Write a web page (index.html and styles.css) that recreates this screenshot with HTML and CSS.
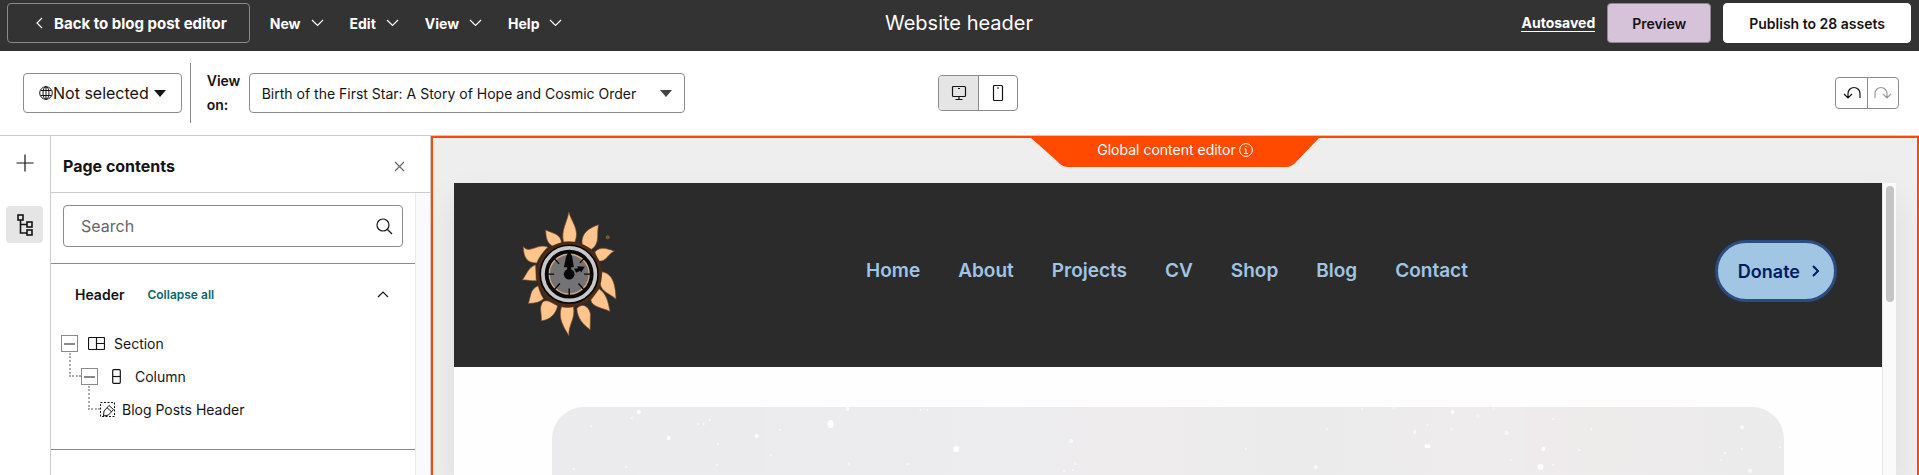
FILE: index.html
```html
<!DOCTYPE html>
<html lang="en">
<head>
    <meta charset="UTF-8">
    <meta name="viewport" content="width=device-width, initial-scale=1.0">
    <title>Website header</title>
    <link rel="stylesheet" href="styles.css">
</head>
<body>
    <header class="topbar">
        <div class="topbar-left">
            <button class="btn btn-back">
                <svg class="icon" width="7" height="12" viewBox="0 0 7 12"><path d="M6 1L1 6l5 5"/></svg>
                Back to blog post editor
            </button>
            <nav class="menus">
                <button class="menu">New <svg class="icon" width="13" height="8" viewBox="0 0 13 8"><path d="M1 1l5.500 5.500L12 1"/></svg></button>
                <button class="menu">Edit <svg class="icon" width="13" height="8" viewBox="0 0 13 8"><path d="M1 1l5.500 5.500L12 1"/></svg></button>
                <button class="menu">View <svg class="icon" width="13" height="8" viewBox="0 0 13 8"><path d="M1 1l5.500 5.500L12 1"/></svg></button>
                <button class="menu">Help <svg class="icon" width="13" height="8" viewBox="0 0 13 8"><path d="M1 1l5.500 5.500L12 1"/></svg></button>
            </nav>
        </div>
        <h1 class="title">Website header</h1>
        <div class="topbar-right">
            <a class="autosaved" href="#">Autosaved</a>
            <button class="btn btn-preview">Preview</button>
            <button class="btn btn-publish">Publish to 28 assets</button>
        </div>
    </header>

    <div class="toolbar">
        <div class="toolbar-left">
            <button class="language">
                <svg class="icon thin" width="14" height="14" viewBox="0 0 14 14"><circle cx="7" cy="7" r="6.300"/><ellipse cx="7" cy="7" rx="3" ry="6.300"/><path d="M7 .7v12.600M1.600 4.500h10.800M1.600 9.500h10.800"/></svg><span>Not selected</span>
                <svg class="caret" width="12" height="7" viewBox="0 0 12 7"><path d="M0 0h12L6 7z"/></svg>
            </button>
            <div class="view-on">
                <label for="post">View on:</label>
                <div class="select-wrap">
                    <select id="post">
                        <option>Birth of the First Star: A Story of Hope and Cosmic Order</option>
                    </select>
                    <svg class="caret" width="12" height="7" viewBox="0 0 12 7"><path d="M0 0h12L6 7z"/></svg>
                </div>
            </div>
        </div>
        <div class="group devices">
            <button class="active" aria-label="Desktop"><svg class="icon" width="16" height="16" viewBox="0 0 16 16"><rect x="1.500" y="1.500" width="13" height="10" rx="1"/><path d="M8 11.500v3M4.500 14.500h7M7 3.500h2"/></svg></button>
            <button aria-label="Mobile"><svg class="icon" width="12" height="18" viewBox="0 0 12 18"><rect x="1.500" y="1.500" width="9" height="15" rx="1"/><path d="M5 4h2"/></svg></button>
        </div>
        <div class="group history">
            <button aria-label="Undo"><svg class="icon" width="18" height="14" viewBox="0 0 18 14"><path d="M1 8l4 4 4-4M5 12V7.500a6 6 0 0 1 12 0V12"/></svg></button>
            <button aria-label="Redo" disabled><svg class="icon" width="18" height="14" viewBox="0 0 18 14"><path d="M17 8l-4 4-4-4M13 12V7.500a6 6 0 0 0-12 0V12"/></svg></button>
        </div>
    </div>

    <div class="workspace">
        <aside class="rail">
            <button aria-label="Add"><svg class="icon" width="18" height="18" viewBox="0 0 18 18"><path d="M9 .5v17M.5 9h17"/></svg></button>
            <button class="active" aria-label="Contents"><svg class="icon tree-icon" width="16" height="22" viewBox="0 0 16 22"><rect x="1" y="1" width="5" height="5"/><rect x="10" y="8" width="5" height="5"/><rect x="10" y="16" width="5" height="5"/><path d="M3.500 6v13H10M3.500 10.500H10"/></svg></button>
        </aside>

        <aside class="panel">
            <div class="panel-header">
                <h2>Page contents</h2>
                <button aria-label="Close"><svg class="icon" width="11" height="11" viewBox="0 0 11 11"><path d="M1 1l9 9M10 1l-9 9"/></svg></button>
            </div>
            <div class="panel-body">
                <div class="panel-content">
                    <div class="search">
                        <input type="text" placeholder="Search" aria-label="Search">
                        <svg class="icon" width="17" height="17" viewBox="0 0 17 17"><circle cx="7" cy="7" r="6"/><path d="M11.500 11.500L16 16"/></svg>
                    </div>
                    <section class="tree-section">
                        <div class="tree-header">
                            <h3>Header</h3>
                            <button class="collapse">Collapse all</button>
                            <button class="toggle" aria-label="Toggle header"><svg class="icon" width="12" height="7" viewBox="0 0 12 7"><path d="M1 6l5-5 5 5"/></svg></button>
                        </div>
                        <ul class="tree">
                            <li>
                                <button class="minus" aria-label="Collapse section"></button>
                                <svg class="icon" width="17" height="13" viewBox="0 0 17 13"><rect x=".5" y=".5" width="16" height="12" rx="1"/><path d="M8.500 .5v12M8.500 6.500h8"/></svg>
                                <span>Section</span>
                            </li>
                            <li class="level-1">
                                <button class="minus" aria-label="Collapse column"></button>
                                <svg class="icon" width="9" height="15" viewBox="0 0 9 15"><rect x=".7" y=".7" width="7.600" height="13.600" rx="1"/><path d="M.7 7.500h7.600"/></svg>
                                <span>Column</span>
                            </li>
                            <li class="level-2">
                                <svg class="icon thin" width="15" height="15" viewBox="0 0 15 15"><rect x=".5" y=".5" width="14" height="14" stroke-dasharray="2 1.500"/><path d="M3.500 14l.5-5L9 3.500l4.500 4L8.500 13zM7 5.700l4.500 4"/></svg>
                                <span>Blog Posts Header</span>
                            </li>
                        </ul>
                    </section>
                </div>
                <div class="panel-scroll"></div>
            </div>
        </aside>

        <main class="canvas">
            <div class="tab">
                <svg class="tab-shape" width="288" height="31" viewBox="0 0 288 31"><path d="M0 2h288l-22 23q-5 6-11 6H37q-6 0-11-6z"/></svg>
                <span>Global content editor</span>
                <svg class="icon thin" width="14" height="14" viewBox="0 0 14 14"><circle cx="7" cy="7" r="6.400"/><path d="M5.500 6H7v4.500M5 10.500h4M6.500 3.500h1"/></svg>
            </div>
            <div class="preview">
                <div class="page">
                    <header class="site-header">
                        <svg class="logo" width="97" height="128" viewBox="65 60 290 385">
                            <g class="petals">
                                <path d="M192 156C184 120 202 100 208 66C216 96 242 120 226 157Z"/>
                                <path d="M248 163C244 130 268 114 298 104C290 128 304 160 276 178Z"/>
                                <path d="M286 186C304 168 322 176 345 184C326 190 322 218 296 213Z"/>
                                <path d="M308 246C342 252 348 286 350 328C334 312 306 308 302 280Z"/>
                                <path d="M299 297C324 314 326 340 332 365C308 354 278 352 274 331Z"/>
                                <path d="M232 356C250 336 270 352 273 374L272 420C252 404 234 388 232 356Z"/>
                                <path d="M186 351C200 354 210 354 222 351C228 390 207 402 208 438C194 414 174 386 186 351Z"/>
                                <path d="M131 335C146 328 160 342 174 348C170 372 150 392 125 393C128 374 116 352 131 335Z"/>
                                <path d="M116 288C120 306 126 318 132 327C118 340 102 340 86 341C94 322 90 298 116 288Z"/>
                                <path d="M108 225L110 273C96 274 82 270 68 270C82 254 84 234 108 225Z"/>
                                <path d="M145 172C130 186 118 202 112 219C84 220 72 206 71 170C88 194 116 158 145 172Z"/>
                                <path d="M138 120C160 130 184 132 186 159L158 168C138 156 140 136 138 120Z"/>
                            </g>
                            <circle cx="209" cy="253" r="94" fill="#080808" stroke="#4b2b15" stroke-width="9"/>
                            <circle cx="209" cy="253" r="79" fill="#080808" stroke="#c6c7ca" stroke-width="11"/>
                            <circle cx="209" cy="253" r="60" fill="#737375" stroke="#d9a77a" stroke-width="4"/>
                            <path d="M209 186v20M209 296v24M142 253h22M254 253h22M165 207l14 15M165 299l16-18M253 299l-16-18M253 207l-12 12" stroke="#080808" stroke-width="4"/>
                            <circle cx="209" cy="253" r="16" fill="#080808"/>
                            <path d="M203 244v-12h-10l7-32 9-20 9 20 5 32h-8v12zM224 237l6 12 12-6 3 5 11-17-23-2 3 6z" fill="#080808"/>
                            <circle cx="325" cy="142" r="5" fill="#71513a" stroke="#a98564"/>
                        </svg>
                        <nav class="site-nav">
                            <a href="#">Home</a>
                            <a href="#">About</a>
                            <a href="#">Projects</a>
                            <a href="#">CV</a>
                            <a href="#">Shop</a>
                            <a href="#">Blog</a>
                            <a href="#">Contact</a>
                        </nav>
                        <a class="donate" href="#">Donate <svg class="icon" width="7" height="12" viewBox="0 0 7 12"><path d="M1 1l5 5-5 5"/></svg></a>
                    </header>
                    <div class="hero">
                        <svg class="stars" width="1234" height="68" viewBox="0 0 1234 68">
                            <g class="bright"><ellipse cx="279" cy="17" rx="3" ry="4"/><ellipse cx="405" cy="42" rx="3" ry="3"/><circle cx="990" cy="60" r="3"/><circle cx="87" cy="5" r="2"/><circle cx="117" cy="31" r="2"/><circle cx="205" cy="29" r="2"/><circle cx="902" cy="5" r="2"/><circle cx="993" cy="42" r="2"/><ellipse cx="877" cy="39" rx="3" ry="2"/></g>
                            <g class="dim"><circle cx="80" cy="11" r="1"/><circle cx="146" cy="17" r="1"/><circle cx="152" cy="17" r="1"/><circle cx="158" cy="13" r="1"/><circle cx="166" cy="37" r="1"/><circle cx="219" cy="48" r="1"/><circle cx="165" cy="58" r="1"/><circle cx="228" cy="23" r="1"/><circle cx="296" cy="2" r="2"/><circle cx="297" cy="57" r="1"/><circle cx="369" cy="3" r="1"/><circle cx="376" cy="3" r="1"/><circle cx="356" cy="57" r="1"/><circle cx="520" cy="34" r="2"/><circle cx="524" cy="57" r="1"/><circle cx="522" cy="63" r="1"/><circle cx="513" cy="64" r="1"/><circle cx="695" cy="42" r="1"/><circle cx="765" cy="60" r="2"/><circle cx="776" cy="22" r="1"/><circle cx="811" cy="2" r="1"/><circle cx="843" cy="1" r="1"/><circle cx="864" cy="25" r="2"/><circle cx="877" cy="18" r="1"/><circle cx="901" cy="22" r="1"/><circle cx="927" cy="9" r="1"/><circle cx="943" cy="1" r="1"/><circle cx="956" cy="26" r="2"/><circle cx="1003" cy="12" r="1"/><circle cx="1041" cy="22" r="1"/><circle cx="1029" cy="43" r="1"/><circle cx="960" cy="53" r="1"/><circle cx="1003" cy="58" r="1"/><circle cx="1192" cy="20" r="2"/><circle cx="1192" cy="42" r="1"/><circle cx="1175" cy="46" r="1"/><circle cx="1171" cy="53" r="1"/><circle cx="1200" cy="64" r="2"/><circle cx="1230" cy="40" r="1"/><circle cx="22" cy="62" r="1"/><circle cx="74" cy="60" r="1"/><circle cx="39" cy="19" r="1"/></g>
                        </svg>
                    </div>
                </div>
                <div class="page-scroll"><div class="thumb"></div></div>
            </div>
        </main>
    </div>
</body>
</html>
```

FILE: styles.css
```css
*,
*::before {
    box-sizing: border-box;
}

body {
    margin: 0;
    height: 100vh;
    overflow: hidden;
    display: flex;
    flex-direction: column;
    background: #fff;
    color: #141414;
    font-family: Inter, 'Noto Sans', sans-serif;
    font-size: 14px;
}

h1, h2, h3, ul {
    margin: 0;
    padding: 0;
}

button, input, select {
    font: inherit;
    color: inherit;
}

button {
    display: flex;
    align-items: center;
    justify-content: center;
    background: none;
    border: none;
    padding: 0;
    cursor: pointer;
}

.icon {
    flex: none;
    fill: none;
    stroke: currentColor;
    stroke-width: 1.2;
}

.thin {
    stroke-width: 1;
}

.caret {
    flex: none;
    fill: currentColor;
}

/* top bar */
.topbar {
    display: grid;
    grid-template-columns: 1fr auto 1fr;
    align-items: center;
    height: 51px;
    padding: 0 8px 5px 7px;
    background: #333;
    color: #fff;
}

.topbar-left,
.topbar-right {
    display: flex;
    align-items: center;
}

.topbar-right {
    justify-content: flex-end;
    gap: 12px;
}

.btn {
    height: 40px;
    border: 1px solid #8a8a8a;
    border-radius: 4px;
    font-weight: 700;
}

.btn-back {
    gap: 11px;
    padding: 0 22px 0 28px;
    font-size: 15px;
}

.menus {
    display: flex;
    gap: 26px;
    margin-left: 20px;
}

.menu {
    gap: 10px;
    font-weight: 700;
}

.title {
    font-size: 20px;
    font-weight: 400;
}

.autosaved {
    color: #fff;
    font-weight: 700;
    line-height: 16px;
    text-decoration: none;
    border-bottom: 1px solid #fff;
}

.btn-preview {
    padding: 0 24px;
    background: #d6c2d9;
    color: #141414;
    font-weight: 600;
}

.btn-publish {
    padding: 0 25px;
    background: #fff;
    border-color: #fff;
    color: #141414;
    font-weight: 600;
}

/* toolbar */
.toolbar {
    display: grid;
    grid-template-columns: 1fr auto 1fr;
    align-items: center;
    height: 85px;
    padding: 0 20px 0 23px;
    border-bottom: 1px solid #ccc;
}

.toolbar-left {
    display: flex;
    align-items: center;
}

.language {
    height: 40px;
    padding: 0 15px;
    border: 1px solid #8a8a8a;
    border-radius: 4px;
    font-size: 16px;
}

.language .caret {
    margin-left: 5px;
}

.view-on {
    display: flex;
    align-items: center;
    gap: 8px;
    height: 60px;
    margin-left: 8px;
    padding-left: 16px;
    border-left: 1px solid #8a8a8a;
}

.view-on label {
    width: 34px;
    font-weight: 600;
    line-height: 24px;
}

.select-wrap {
    display: grid;
    align-items: center;
    width: 436px;
}

.select-wrap select,
.select-wrap .caret {
    grid-area: 1 / 1;
}

.select-wrap select {
    appearance: none;
    width: 100%;
    height: 40px;
    padding: 0 40px 0 12px;
    border: 1px solid #8a8a8a;
    border-radius: 4px;
    background: #fff;
}

.select-wrap .caret {
    justify-self: end;
    margin-right: 13px;
    color: #444;
    pointer-events: none;
}

.group {
    display: flex;
    border: 1px solid #8a8a8a;
    border-radius: 4px;
    overflow: hidden;
}

.group button + button {
    border-left: 1px solid #8a8a8a;
}

.devices {
    margin-left: 34px;
}

.devices button {
    width: 39px;
    height: 34px;
}

.devices .active {
    background: #e5e5e5;
}

.history {
    justify-self: end;
}

.history button {
    width: 31px;
    height: 30px;
}

.history button:disabled {
    color: #999;
}

/* workspace */
.workspace {
    display: flex;
    flex: 1;
    min-height: 0;
}

.rail {
    display: flex;
    flex-direction: column;
    align-items: center;
    gap: 25px;
    width: 51px;
    padding: 8px 1px 0 0;
    border-right: 1px solid #ccc;
}

.rail button {
    width: 37px;
    height: 37px;
    border-radius: 4px;
}

.rail .active {
    background: #e5e5e5;
}

.tree-icon {
    stroke-width: 1.6;
}

.panel {
    display: flex;
    flex-direction: column;
    width: 380px;
    border-right: 1px solid #ccc;
}

.panel-header {
    display: flex;
    align-items: center;
    justify-content: space-between;
    height: 57px;
    padding: 4px 25px 0 12px;
    border-bottom: 1px solid #ccc;
}

.panel-header h2 {
    font-size: 16px;
    font-weight: 700;
}

.panel-header button {
    color: #666;
}

.panel-body {
    display: flex;
    flex: 1;
    min-height: 0;
}

.panel-content {
    flex: 1;
}

.panel-scroll {
    width: 15px;
    background: #fafafa;
    border-left: 1px solid #e8e8e8;
}

.search {
    display: flex;
    align-items: center;
    height: 42px;
    margin: 12px 12px 16px;
    padding: 0 9px 0 17px;
    border: 1px solid #8a8a8a;
    border-radius: 4px;
}

.search input {
    flex: 1;
    padding: 0;
    border: none;
    outline: none;
    background: none;
    font-size: 16px;
}

.search input::placeholder {
    color: #666;
}

.tree-section {
    height: 187px;
    border-top: 1px solid #8a8a8a;
    border-bottom: 1px solid #8a8a8a;
}

.tree-header {
    display: flex;
    align-items: center;
    height: 60px;
    padding: 0 26px 0 24px;
}

.tree-header h3 {
    font-size: 14px;
    font-weight: 600;
}

.collapse {
    margin-left: 23px;
    color: #0b6666;
    font-size: 12px;
    font-weight: 600;
}

.toggle {
    margin-left: auto;
}

.tree {
    padding: 3px 0 0 10px;
    list-style: none;
}

.tree li {
    display: flex;
    align-items: center;
    height: 33px;
}

.tree li span {
    margin-left: 9px;
}

.minus {
    width: 17px;
    height: 17px;
    margin-right: 10px;
    border: 1px solid #8a8a8a;
}

.minus::before {
    content: '';
    width: 11px;
    height: 2px;
    background: #8a8a8a;
}

/* dotted connectors between tree levels */
.level-1::before,
.level-2::before {
    content: '';
    width: 12px;
    height: 24px;
    margin: 0 0 24px 8px;
    border-left: 2px dotted #aaa;
    border-bottom: 2px dotted #aaa;
}

.level-1 .icon {
    margin: 0 5px 0 4px;
}

.tree .level-2::before {
    margin-left: 27px;
}

.tree .level-2 span {
    margin-left: 7px;
}

/* canvas */
.canvas {
    display: flex;
    flex-direction: column;
    flex: 1;
    min-width: 0;
    border: 2px solid #ff4a00;
    border-bottom: none;
    background: #eee;
}

.tab {
    position: relative;
    display: flex;
    align-items: center;
    justify-content: center;
    gap: 3px;
    align-self: center;
    width: 288px;
    height: 28px;
    margin-bottom: 17px;
    padding-bottom: 5px;
    color: #fff;
}

.tab-shape {
    position: absolute;
    top: -2px;
    left: 0;
    fill: #ff4a00;
}

.tab span,
.tab .icon {
    position: relative;
}

.preview {
    display: flex;
    flex: 1;
    min-height: 0;
    margin: 0 21px;
    box-shadow: 0 16px 32px rgba(0, 0, 0, 0.08);
}

.page {
    flex: 1;
    min-width: 0;
    background: #fefefe;
    overflow: hidden;
}

.page-scroll {
    width: 14px;
    padding: 3px 2px 0 3px;
    background: #fafafa;
    border-left: 1px solid #e8e8e8;
}

.thumb {
    width: 8px;
    height: 116px;
    border-radius: 4px;
    background: #c4c4c4;
}

.site-header {
    display: grid;
    grid-template-columns: 1fr auto 1fr;
    align-items: center;
    height: 184px;
    padding: 0 45px 0 67px;
    background: #2b2b2b;
}

.logo {
    margin-bottom: 2px;
}

.petals {
    fill: #ffc58c;
    stroke: #7a4a2a;
    stroke-width: 2;
}

.site-nav {
    display: flex;
    gap: 38px;
    padding: 0 24px 10px 0;
}

.site-nav a {
    color: #9ec5e3;
    font-size: 19px;
    font-weight: 600;
    text-decoration: none;
}

.donate {
    display: flex;
    align-items: center;
    justify-self: end;
    gap: 12px;
    height: 62px;
    margin-bottom: 8px;
    padding: 0 15px 0 20px;
    border: 3px solid #2c4c80;
    border-radius: 31px;
    background: #a1c6e3;
    color: #001b5e;
    font-size: 18px;
    font-weight: 600;
    text-decoration: none;
}

.donate .icon {
    stroke-width: 2;
}

.hero {
    height: 400px;
    margin: 40px 98px 0;
    border-radius: 32px;
    background: linear-gradient(90deg, #ebebed, #ececee 30%, #eeeced 48%, #ebebec 60%, #efeced 80%, #ebebeb);
    overflow: hidden;
}

.stars {
    width: 100%;
    fill: #fff;
}

.dim {
    opacity: 0.7;
}
```
